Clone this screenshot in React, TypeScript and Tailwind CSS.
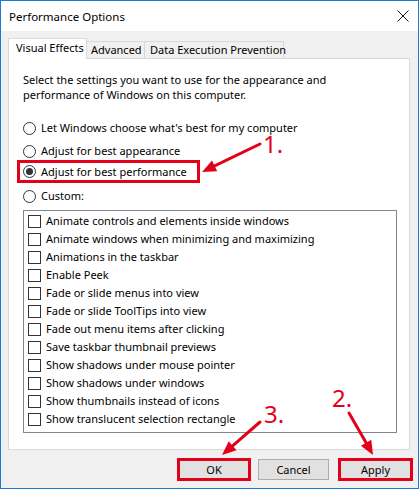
import React from "react";

const RED = "#e3001b";

function Radio({ checked, label }: { checked?: boolean; label: string }) {
  return (
    <div className="flex items-center h-[18px]">
      <span className="w-[13px] h-[13px] rounded-full border border-[#333333] bg-white flex items-center justify-center shrink-0">
        {checked && <span className="w-[7px] h-[7px] rounded-full bg-[#333333]" />}
      </span>
      <span className="ml-[5px] text-[11px] leading-[14px] text-black whitespace-nowrap">{label}</span>
    </div>
  );
}

function Check({ label }: { label: string }) {
  return (
    <div className="flex items-center h-[18px]">
      <span className="w-[13px] h-[13px] border border-[#333333] bg-white shrink-0" />
      <span className="ml-[5px] text-[11px] leading-[14px] text-black whitespace-nowrap">{label}</span>
    </div>
  );
}

const items = [
  "Animate controls and elements inside windows",
  "Animate windows when minimizing and maximizing",
  "Animations in the taskbar",
  "Enable Peek",
  "Fade or slide menus into view",
  "Fade or slide ToolTips into view",
  "Fade out menu items after clicking",
  "Save taskbar thumbnail previews",
  "Show shadows under mouse pointer",
  "Show shadows under windows",
  "Show thumbnails instead of icons",
  "Show translucent selection rectangle",
];

export default function App() {
  return (
    <div className="relative w-[419px] h-[489px] overflow-hidden font-['Noto_Sans',sans-serif] text-black">
      <div className="w-[419px] h-[489px] border border-[#1a7ad4] flex flex-col bg-[#f0f0f0]">
        {/* Title bar */}
        <div className="h-[30px] bg-white flex items-center justify-between pl-[8px] pr-[9px] shrink-0">
          <span className="text-[11.5px] leading-[15px]">Performance Options</span>
          <svg width="12" height="12" viewBox="0 0 12 12" className="shrink-0">
            <path d="M0.5 0.5 L11.5 11.5 M11.5 0.5 L0.5 11.5" stroke="#111" strokeWidth="1" fill="none" />
          </svg>
        </div>
        {/* Body */}
        <div className="flex-1 flex flex-col pl-[7px] pr-[8px] pt-[7px] pb-[7px]">
          {/* Tabs */}
          <div className="relative z-10 flex items-end h-[21px]">
            <div className="w-[79px] h-[21px] bg-white border-l border-t border-r border-[#d9d9d9] pl-[7px] flex items-center text-[11px] leading-[14px] pb-[2px] whitespace-nowrap">
              Visual Effects
            </div>
            <div className="w-[58px] h-[18px] bg-[#f0f0f0] border border-[#d9d9d9] border-l-0 pl-[4px] flex items-center text-[11px] leading-[14px] whitespace-nowrap">
              Advanced
            </div>
            <div className="w-[139px] h-[18px] bg-[#f0f0f0] border border-[#d9d9d9] border-l-0 pl-[5px] flex items-center text-[11px] leading-[14px] whitespace-nowrap">
              Data Execution Prevention
            </div>
          </div>
          {/* Panel */}
          <div className="mt-[-1px] bg-white border border-[#d9d9d9] pl-[14px] pr-[12px] pt-[14px] pb-[16px]">
            <div className="text-[11px] leading-[14px]">
              <div className="h-[15px]">Select the settings you want to use for the appearance and</div>
              <div className="h-[15px]">performance of Windows on this computer.</div>
            </div>
            <div className="mt-[16px] flex flex-col">
              <Radio label="Let Windows choose what's best for my computer" />
              <div className="mt-[5px]">
                <Radio label="Adjust for best appearance" />
              </div>
              <div className="ml-[-6px] w-[183px] h-[23px] border-[3px] border-[#e3001b] pl-[3px] flex items-center">
                <Radio checked label="Adjust for best performance" />
              </div>
              <div className="mt-[4px]">
                <Radio label="Custom:" />
              </div>
            </div>
            <div className="mt-[5px] h-[223px] border border-[#828790] bg-white pl-[4px] pt-[1px]">
              {items.map((t) => (
                <Check key={t} label={t} />
              ))}
            </div>
          </div>
          {/* Buttons */}
          <div className="mt-[8px] mr-[-3px] flex justify-end items-center">
            <div className="w-[74px] h-[23px] border-[3px] border-[#e3001b] bg-[#e1e1e1] flex items-center justify-center text-[11px] leading-[14px]">
              OK
            </div>
            <div className="ml-[7px] w-[71px] h-[21px] border border-[#adadad] bg-[#e1e1e1] flex items-center justify-center text-[11px] leading-[14px]">
              Cancel
            </div>
            <div className="ml-[9px] w-[75px] h-[23px] border-[3px] border-[#e3001b] bg-[#e1e1e1] flex items-center justify-center text-[11px] leading-[14px]">
              Apply
            </div>
          </div>
        </div>
      </div>

      {/* Annotation overlays */}
      <svg className="absolute left-0 top-0 pointer-events-none" width="419" height="489" viewBox="0 0 419 489">
        <g stroke={RED} strokeWidth="3" strokeLinecap="round" fill="none">
          <line x1="260" y1="144" x2="214.6" y2="165.9" />
          <line x1="349" y1="413" x2="366.1" y2="442.8" />
          <line x1="260" y1="422" x2="232.6" y2="445.8" />
        </g>
        <g fill={RED}>
          <polygon points="202,172 217.2,171.3 212.0,160.5" />
          <polygon points="373,455 360.9,445.8 371.3,439.8" />
          <polygon points="222,455 236.5,450.3 228.7,441.3" />
        </g>
      </svg>
      <span className="absolute left-[263px] top-[137px] text-[24px] leading-[14px] text-[#e3001b]">1.</span>
      <span className="absolute left-[332px] top-[391px] text-[24px] leading-[14px] text-[#e3001b]">2.</span>
      <span className="absolute left-[264px] top-[407px] text-[24px] leading-[14px] text-[#e3001b]">3.</span>
    </div>
  );
}
